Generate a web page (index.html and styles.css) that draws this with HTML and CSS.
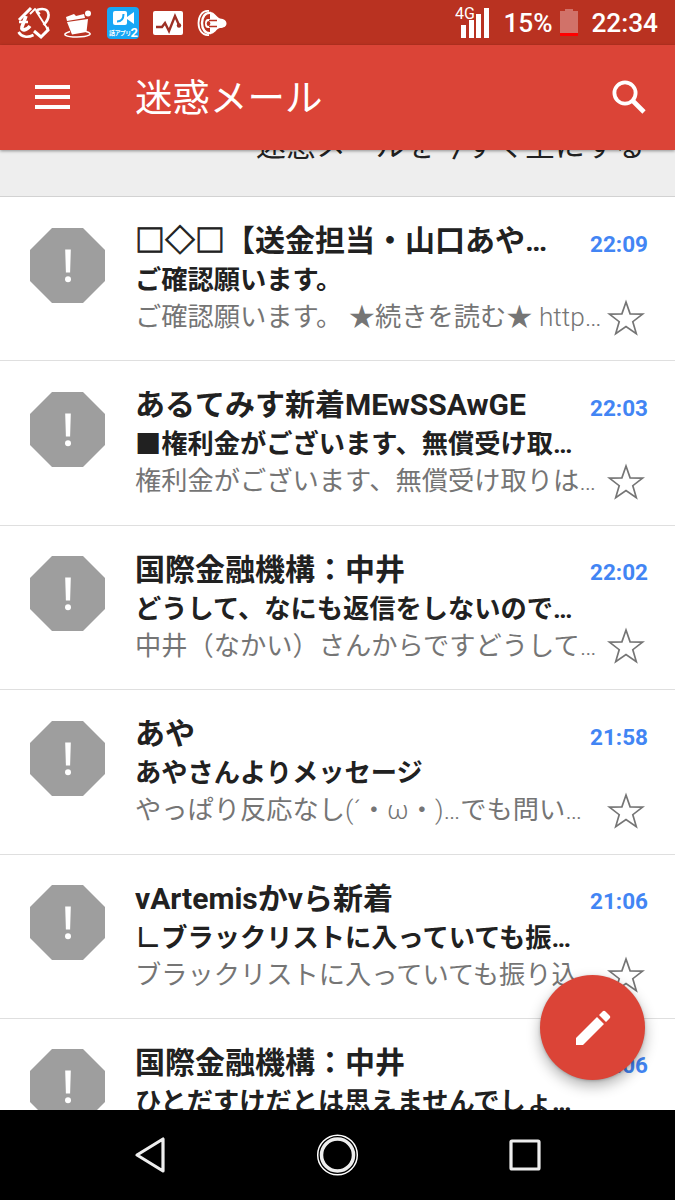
FILE: index.html
```
<!DOCTYPE html>
<html lang="ja">
<head>
<meta charset="utf-8">
<title>迷惑メール</title>
<link rel="stylesheet" href="styles.css">
</head>
<body>
<svg class="defs" width="0" height="0">
  <symbol id="spam" viewBox="0 0 75 75"><path fill="#9e9e9e" d="M22 0h31l22 22v31L53 75H22L0 53V22z"/><path fill="#fff" d="M35.200 21.500h5.600l-.7 23h-4.200z"/><circle cx="38" cy="51.300" r="3" fill="#fff"/></symbol>
  <symbol id="star" viewBox="0 0 40 40"><path fill="none" stroke="#757575" stroke-width="1.7" d="M20 4l4.100 11.800 12.500.3-9.800 7.600 3.500 11.900L20 28.500 9.700 35.600l3.500-11.900-9.800-7.600 12.500-.3z"/></symbol>
</svg>
<div class="phone">
  <header class="status">
    <div class="notifications">
      <svg width="34" height="36" viewBox="0 0 34 36" fill="none" stroke="#fff"><path d="M3 15L15 3" stroke-width="3"/><path d="M14 9l5-5 5 5M20 6l11 17" stroke-width="1.800"/><path d="M31 22l1 3-7 7-7-6" stroke-width="3"/><path d="M21 5c6-2 11-1 11.500 4 .5 4-2 8-5 11" stroke-width="2.600"/><path d="M10 11L6 22c-1 4 4 4 8-1" stroke-width="3.600"/><path d="M3 17h9M2.500 27c3 5 9 6 15 3" stroke-width="2.600"/></svg>
      <svg width="28" height="36" viewBox="0 0 28 36"><path fill="#fff" d="M2 12l8-3 2 2 8-2 1 4L3 16zM3 17l21-3-1.500 13L8 29.500z"/><circle cx="24" cy="8.500" r="3" fill="#fff"/><path d="M6 26.500C-4 29.500 2 32 13 32s18-3 9-5.500" fill="none" stroke="#fff" stroke-width="1.500"/></svg>
      <span class="app"><svg width="32" height="32" viewBox="0 0 32 32"><rect x="6" y="4" width="14" height="14" rx="2" fill="#fff"/><path fill="#fff" d="M20 10l7-5v12l-7-5z"/><path d="M16.500 7c0 5-2 7.500-6.500 7.500" fill="none" stroke="#18a7f5" stroke-width="2"/></svg><b class="app-name">話アプリ<i>2</i></b></span>
      <svg width="30" height="36" viewBox="0 0 30 36"><rect y="6" width="30" height="24" rx="2" fill="#fff"/><path d="M3 22h6l3-4 4 8 6-15 4 9" fill="none" stroke="#9d3025" stroke-width="2.400"/><circle cx="26" cy="20.500" r="2.200" fill="#9d3025"/></svg>
      <svg width="30" height="36" viewBox="0 0 30 36"><path d="M12 6C-2 4-2 32 12 30" fill="none" stroke="#fff" stroke-width="1.800"/><path d="M14 8C2 6 2 30 14 28" fill="none" stroke="#fff" stroke-width="2.400"/><path fill="#fff" d="M13 7c5 0 6 5 10 6.500 4 .5 6.500 2 6.500 5s-3 4.500-6.500 4.500c-4 1-5 6-10 6v-6h-2a3 4.500 0 0 1 0-9h2z"/><path fill="none" stroke="#b93221" stroke-width="1.400" d="M20 15.500h-8M20 21.500h-8"/><ellipse cx="11.500" cy="18.500" rx="1.800" ry="2.500" fill="#b93221"/></svg>
    </div>
    <div class="system">
      <svg class="signal" width="36" height="36" viewBox="0 0 36 36"><path fill="#fff" d="M6 20h5v13H6zM14 15h5v18h-5zM21 9h5v24h-5zM29 3h5v30h-5z"/><text x="0" y="13.500" class="network">4G</text></svg>
      <span class="battery-text">15%</span>
      <svg class="battery" width="18" height="27" viewBox="0 0 18 27"><path fill="#d17269" d="M5 0h8v2h5v22H0V2h5z"/><path fill="#f00" d="M0 24h18v3H0z"/></svg>
      <time>22:34</time>
    </div>
  </header>
  <div class="toolbar">
    <svg class="menu" width="36" height="26" viewBox="0 0 36 26"><path fill="#fff" d="M0 1h35v4H0zM0 11h35v4H0zM0 21h35v4H0z"/></svg>
    <h1>迷惑メール</h1>
    <svg class="search" width="34" height="34" viewBox="0 0 34 34" fill="none" stroke="#fff"><circle cx="13" cy="13" r="10.600" stroke-width="3.800"/><path d="M20.500 20.500L32 32" stroke-width="4.600"/></svg>
  </div>
  <main class="content">
    <div class="empty"><span>迷惑メールを今すぐ空にする</span></div>
    <article class="mail">
      <svg class="avatar"><use href="#spam"/></svg>
      <div class="text"><h2><span class="shapes">□◇□</span>【送金担当・山口あや…</h2><h3>ご確認願います。</h3><p>ご確認願います。<i> </i>★続きを読む★<i> http…</i></p></div>
      <div class="side"><time>22:09</time><svg><use href="#star"/></svg></div>
    </article>
    <article class="mail">
      <svg class="avatar"><use href="#spam"/></svg>
      <div class="text"><h2>あるてみす新着MEwSSAwGE</h2><h3>■権利金がございます、無償受け取…</h3><p>権利金がございます、無償受け取りは<i>…</i></p></div>
      <div class="side"><time>22:03</time><svg><use href="#star"/></svg></div>
    </article>
    <article class="mail">
      <svg class="avatar"><use href="#spam"/></svg>
      <div class="text"><h2>国際金融機構：中井</h2><h3>どうして、なにも返信をしないので…</h3><p>中井（なかい）さんからですどうして<i>…</i></p></div>
      <div class="side"><time>22:02</time><svg><use href="#star"/></svg></div>
    </article>
    <article class="mail">
      <svg class="avatar"><use href="#spam"/></svg>
      <div class="text"><h2>あや</h2><h3>あやさんよりメッセージ</h3><p>やっぱり反応なし<i>(´</i>・<i>ω</i>・<i>)…</i>でも問い<i>…</i></p></div>
      <div class="side"><time>21:58</time><svg><use href="#star"/></svg></div>
    </article>
    <article class="mail">
      <svg class="avatar"><use href="#spam"/></svg>
      <div class="text"><h2>vArtemisかvら新着</h2><h3>∟ブラックリストに入っていても振…</h3><p>ブラックリストに入っていても振り込<i>…</i></p></div>
      <div class="side"><time>21:06</time><svg><use href="#star"/></svg></div>
    </article>
    <article class="mail">
      <svg class="avatar"><use href="#spam"/></svg>
      <div class="text"><h2>国際金融機構：中井</h2><h3>ひとだすけだとは思えませんでしょ…</h3></div>
      <div class="side"><time>21:06</time></div>
    </article>
    <div class="compose"><svg width="36" height="36" viewBox="0 0 36 36" fill="#fff"><path d="M1 28L22 7l7 7L8 35H1zM24 5l3.500-3.500q1.500-1.500 3 0l4 4q1.500 1.500 0 3L31 12z"/></svg></div>
  </main>
  <nav class="navbar">
    <svg viewBox="0 0 44 44"><path d="M35 6v32L9 22z" fill="none" stroke="#eee" stroke-width="3.200" stroke-linejoin="round"/></svg>
    <svg viewBox="0 0 44 44" fill="none"><circle cx="21.500" cy="22" r="19.800" stroke="#fff" stroke-width="1.500"/><circle cx="21.500" cy="22" r="16" stroke="#eee" stroke-width="3.500"/></svg>
    <svg viewBox="0 0 44 44"><rect x="8" y="8" width="28" height="28" rx="1" fill="none" stroke="#eee" stroke-width="3.200"/></svg>
  </nav>
</div>
</body>
</html>
```
FILE: styles.css
```
* { box-sizing: border-box; }
body { margin: 0; font-family: Roboto, "Noto Sans CJK JP", sans-serif; color: #212121; background: #fff; }
h1, h2, h3, p { margin: 0; }
svg { display: block; flex: none; }
.defs { position: absolute; }
.phone { width: 675px; height: 1200px; display: flex; flex-direction: column; overflow: hidden; }
.status { height: 45px; flex: none; background: #b93221; color: #fff; display: flex; justify-content: space-between; align-items: center; padding: 0 17px 0 16px; }
.notifications { display: flex; align-items: center; gap: 14px; }
.notifications > :nth-child(3) { margin-left: 1px; }
.app { width: 32px; height: 32px; background: #18a7f5; border-radius: 4px; position: relative; }
.app-name { position: absolute; left: 2px; bottom: 1px; font-size: 6px; line-height: 10px; white-space: nowrap; display: flex; align-items: flex-end; letter-spacing: -.6px; }
.app-name i { font-size: 13px; font-style: normal; }
.system { display: flex; align-items: center; font-size: 26.250px; font-weight: 500; }
.network { font: 400 16px Roboto, sans-serif; fill: #fff; }
.signal { margin-right: -1px; }
.battery-text { margin-left: 13px; width: 57px; }
.battery { margin-right: 13px; }
.toolbar { height: 105px; flex: none; background: #db4437; color: #fff; display: flex; align-items: center; padding: 0 29px 0 35px; position: relative; z-index: 2; box-shadow: 0 1px 3px rgba(0,0,0,.4); }
.menu { margin-bottom: 1px; }
.toolbar h1 { font-size: 37.500px; font-weight: 400; line-height: 56px; margin-left: 64px; }
.search { margin: 0 0 1px auto; }
.content { flex: 1; min-height: 0; position: relative; overflow: hidden; }
.empty { height: 47px; background: #eee; border-bottom: 1px solid #d2d2d2; display: flex; justify-content: flex-end; align-items: flex-end; padding: 0 30px 28px 0; font-size: 29.900px; line-height: 44px; }
.mail { height: 164.400px; display: grid; grid-template-columns: 75px 1fr 60px; column-gap: 30px; padding: 24px 27px 0 30px; border-bottom: 1.500px solid #dfdfdf; }
.avatar { width: 75px; height: 75px; margin-top: 6.500px; }
.text { white-space: nowrap; min-width: 0; }
.text h2 { font-size: 30px; line-height: 40px; font-weight: 700; }
.shapes { -webkit-text-stroke: .8px #212121; }
.text h3 { font-size: 26.250px; line-height: 38px; font-weight: 700; }
.text p { font-size: 26.250px; line-height: 36px; font-weight: 400; color: #757575; }
.text p i { font-style: normal; font-weight: 300; }
.side { display: flex; flex-direction: column; align-items: flex-end; }
.side time { font-size: 22.500px; line-height: 26px; margin-top: 9.500px; font-weight: 700; color: #4285f4; }
.side svg { width: 40px; height: 40px; margin: 41px 2px 0 0; }
.compose { position: absolute; right: 30px; bottom: 30px; width: 105px; height: 105px; border-radius: 50%; background: #db4437; display: grid; place-items: center; box-shadow: 0 6px 14px rgba(0,0,0,.3), 0 1px 3px rgba(0,0,0,.2); }
.navbar { height: 90px; flex: none; background: #000; display: flex; align-items: center; justify-content: space-between; padding: 0 128px 0 128px; }
.navbar svg { width: 44px; height: 44px; }
```
